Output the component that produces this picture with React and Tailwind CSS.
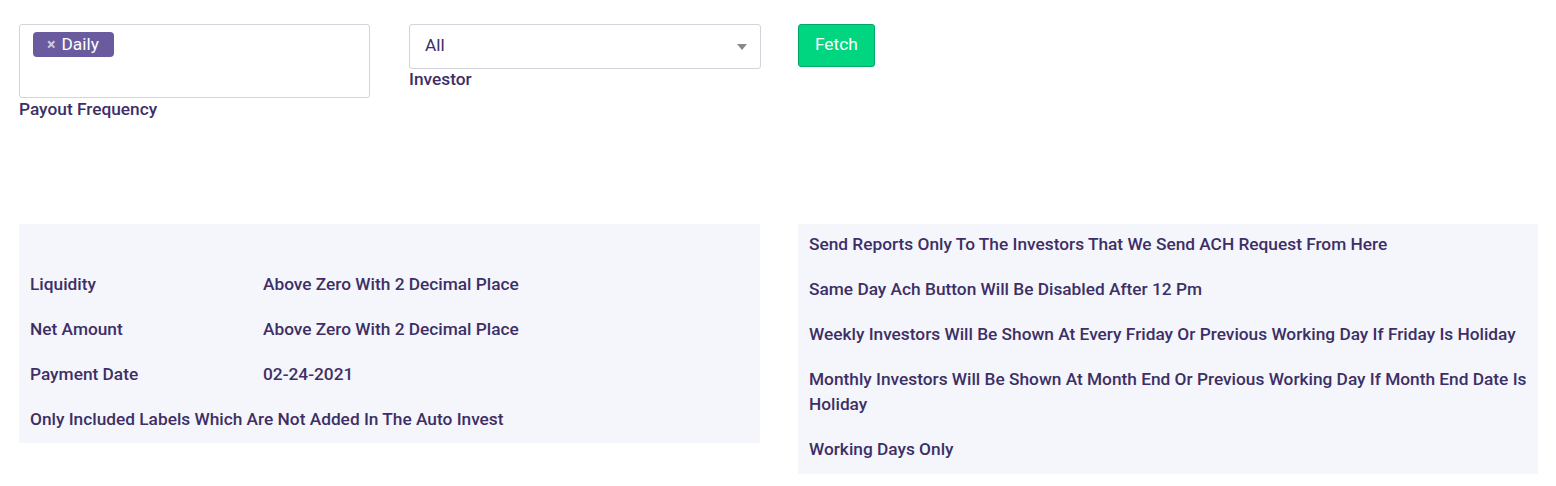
import React from 'react';

const leftRows = [
    { label: '', value: '' },
    { label: 'Liquidity', value: 'Above Zero With 2 Decimal Place' },
    { label: 'Net Amount', value: 'Above Zero With 2 Decimal Place' },
    { label: 'Payment Date', value: '02-24-2021' },
];

const notes = [
    'Send Reports Only To The Investors That We Send ACH Request From Here',
    'Same Day Ach Button Will Be Disabled After 12 Pm',
    'Weekly Investors Will Be Shown At Every Friday Or Previous Working Day If Friday Is Holiday',
    'Monthly Investors Will Be Shown At Month End Or Previous Working Day If Month End Date Is Holiday',
    'Working Days Only',
];

export default function App() {
    return (
        <div className="min-h-screen bg-white text-[#3d2f66] font-['Roboto',sans-serif] text-[17.3px] leading-[25px]">
            {/* filtros */}
            <div className="grid grid-cols-4 pt-[24px]">
                <div className="px-[19px]">
                    <div className="h-[74px] border border-[#d3d3db] rounded-[3px] pl-[13px] pt-[7px]">
                        <span className="inline-flex items-center h-[25px] pl-[14px] pr-[15px] rounded-[4px] bg-[#6a5b9f] text-white font-normal">
                            <span className="text-[#cfc9e2] text-[16px] mr-[6px] font-bold">×</span>Daily
                        </span>
                    </div>
                    <div className="font-medium mt-[-1px]">Payout Frequency</div>
                </div>
                <div className="pl-[20px] pr-[17px]">
                    <div className="h-[45px] border border-[#d3d3db] rounded-[3px] flex items-center justify-between pl-[15px] pr-[13px] pb-[3px]">
                        <span className="font-normal">All</span>
                        <span className="w-0 h-0 mt-[3px] border-l-[5px] border-r-[5px] border-t-[6px] border-l-transparent border-r-transparent border-t-[#888888]" />
                    </div>
                    <div className="font-medium mt-[-2px]">Investor</div>
                </div>
                <div className="px-[19px] pl-[20px]">
                    <button className="h-[43px] px-[16px] pb-[2px] bg-[#00d67f] border border-[#00a863] rounded-[3px] text-white font-normal">
                        Fetch
                    </button>
                </div>
                <div />
            </div>

            {/* info */}
            <div className="grid grid-cols-2 mt-[102px] items-start">
                <div className="pl-[19px] pr-[18px]">
                    <div className="bg-[#f5f6fb] pl-[11px] pt-[3px] pb-[11px] flex flex-col gap-[20px] font-medium">
                        {leftRows.map((row, i) => (
                            <div key={i} className="flex h-[25px]">
                                <div className="w-[233px]">{row.label}</div>
                                <div>{row.value}</div>
                            </div>
                        ))}
                        <div>Only Included Labels Which Are Not Added In The Auto Invest</div>
                    </div>
                </div>
                <div className="pl-[20px] pr-[18px]">
                    <div className="bg-[#f5f6fb] pl-[11px] pr-[4px] pt-[8px] pb-[12px] flex flex-col gap-[20px] font-medium">
                        {notes.map((note, i) => (
                            <div key={i}>{note}</div>
                        ))}
                    </div>
                </div>
            </div>
        </div>
    );
}
